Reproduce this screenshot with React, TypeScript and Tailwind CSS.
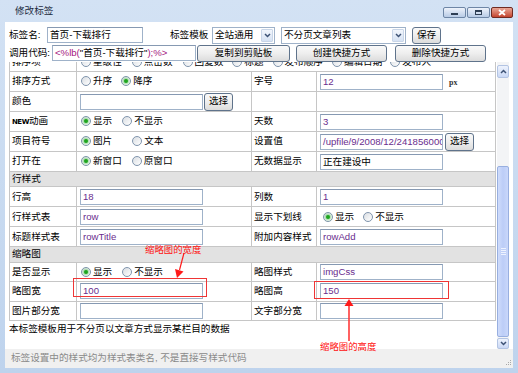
import type { ReactNode } from "react";

const FONT = "font-['Liberation_Sans','Noto_Sans_CJK_SC',sans-serif]";
const LATIN = "text-[#6a2d8e]";

function Radio({ checked = false, label, className = "" }: { checked?: boolean; label: string; className?: string }) {
  return (
    <span className={`inline-flex items-center ${className}`}>
      <span className="flex h-[10px] w-[10px] items-center justify-center rounded-full border border-[#8095ad] bg-gradient-to-br from-[#d9dde2] to-white">
        {checked && <span className="h-[4px] w-[4px] rounded-full bg-[#1fa51f] shadow-[0_0_2px_1px_rgba(70,200,70,0.55)]" />}
      </span>
      <span className="ml-[2px]">{label}</span>
    </span>
  );
}

function Field({ children, className = "" }: { children?: ReactNode; className?: string }) {
  return (
    <div
      className={`h-[16px] shrink-0 overflow-hidden whitespace-nowrap border border-[#9fb2c9] border-t-[#8699b2] bg-white pl-[2px] leading-[14px] ${className}`}
    >
      {children}
    </div>
  );
}

function Btn({ children, className = "" }: { children: ReactNode; className?: string }) {
  return (
    <div
      className={`flex shrink-0 items-center justify-center rounded-[3px] border border-[#5f738b] bg-gradient-to-b from-[#fafafa] via-[#eeeeee] to-[#dcdcdc] ${className}`}
    >
      {children}
    </div>
  );
}

function Chevron({ up = false }: { up?: boolean }) {
  return (
    <svg width="7" height="5" viewBox="0 0 7 5">
      <path d={up ? "M1 4 L3.5 1.5 L6 4" : "M1 1 L3.5 3.5 L6 1"} fill="none" stroke="#3d5275" strokeWidth="1.5" />
    </svg>
  );
}

function Select({ value, className = "" }: { value: string; className?: string }) {
  return (
    <div className={`flex h-[17px] shrink-0 items-center border border-[#9fb2c9] bg-white ${className}`}>
      <span className="flex-1 overflow-hidden whitespace-nowrap pl-[2px]">{value}</span>
      <span className="mr-[1px] flex h-[13px] w-[12px] items-center justify-center rounded-[1px] border border-[#c9d6e8] bg-gradient-to-b from-[#f2f6fc] to-[#d6e2f3]">
        <Chevron />
      </span>
    </div>
  );
}

const td = "border border-[#c6c6c6] p-0";

function Row({ l1, v1, l2, v2, h = "h-[20px]" }: { l1: ReactNode; v1?: ReactNode; l2?: ReactNode; v2?: ReactNode; h?: string }) {
  return (
    <tr className={h}>
      <td className={`${td} pl-[2px]`}>{l1}</td>
      <td className={td}>
        <div className="flex items-center pl-[3px]">{v1}</div>
      </td>
      <td className={`${td} pl-[2px] whitespace-nowrap`}>{l2}</td>
      <td className={td}>
        <div className="flex items-center pl-[3px]">{v2}</div>
      </td>
    </tr>
  );
}

function Section({ title, h }: { title: string; h: string }) {
  return (
    <tr className={`${h} bg-[#e2e2e2]`}>
      <td colSpan={4} className={`${td} pl-[2px]`}>
        {title}
      </td>
    </tr>
  );
}

function WinBtn({ children, className = "" }: { children: ReactNode; className?: string }) {
  return (
    <div className={`flex h-[11px] items-center justify-center rounded-[2px] border ${className}`}>{children}</div>
  );
}

export default function App() {
  return (
    <div className={`relative h-[373px] w-[518px] overflow-hidden bg-gradient-to-b from-[#d3e2f4] to-[#bed3ed] text-[9.6px] text-black ${FONT}`}>
      {/* title bar */}
      <div className="flex h-[22px]">
        <span className="ml-[15px] self-center text-[#1c2b40]">修改标签</span>
        <div className="ml-auto mr-[5px] mt-[7px] flex gap-[1px]">
          <WinBtn className="w-[23px] border-[#6e86a6] bg-gradient-to-b from-[#eef3fb] to-[#b8cbe6]">
            <span className="mt-[3px] h-[2px] w-[7px] bg-[#2f3f55]" />
          </WinBtn>
          <WinBtn className="w-[23px] border-[#6e86a6] bg-gradient-to-b from-[#eef3fb] to-[#b8cbe6]">
            <span className="h-[5px] w-[7px] border border-t-2 border-[#2f3f55]" />
          </WinBtn>
          <WinBtn className="w-[22px] border-[#6f2b22] bg-gradient-to-b from-[#e9a696] to-[#c3432e]">
            <svg width="8" height="7" viewBox="0 0 8 7">
              <path d="M1 1 L7 6 M7 1 L1 6" stroke="white" strokeWidth="1.8" />
            </svg>
          </WinBtn>
        </div>
      </div>

      {/* body */}
      <div className="mx-[5px] flex h-[346px] flex-col bg-white">
        <div className="mt-[4px] flex h-[18px] items-center">
          <span className="ml-[4px] w-[38px] shrink-0">标签名:</span>
          <Field className="w-[96px]">首页-下载排行</Field>
          <span className="ml-[27px] w-[42px] shrink-0">标签模板</span>
          <Select className="w-[63px]" value="全站通用" />
          <Select className="ml-[6px] w-[125px]" value="不分页文章列表" />
          <Btn className="ml-[6px] h-[17px] w-[29px]">保存</Btn>
        </div>
        <div className="flex h-[18px] items-center">
          <span className="ml-[4px] w-[43px] shrink-0">调用代码:</span>
          <Field className="w-[144px]">
            <span className="text-[#a5157e]">&lt;%lb(</span>"首页-下载排行"<span className="text-[#a5157e]">);%&gt;</span>
          </Field>
          <Btn className="ml-[1px] h-[17px] w-[93px]">复制到剪贴板</Btn>
          <Btn className="ml-[6px] h-[17px] w-[91px]">创建快捷方式</Btn>
          <Btn className="ml-[8px] h-[17px] w-[91px]">删除快捷方式</Btn>
        </div>

        {/* scrolling form */}
        <div className="ml-[4px] flex h-[287px]">
          <div className="w-[487px] overflow-hidden">
            <table className="-mt-[11px] w-[486px] table-fixed border-collapse">
              <colgroup>
                <col className="w-[67px]" />
                <col className="w-[175px]" />
                <col className="w-[65px]" />
                <col className="w-[179px]" />
              </colgroup>
              <tbody>
                <tr className="h-[20px]">
                  <td className={`${td} pl-[2px] align-bottom pb-[2px]`}>排序项</td>
                  <td colSpan={3} className={`${td} align-bottom pb-[2px]`}>
                    <div className="flex items-center pl-[4px]">
                      <Radio label="星级性" />
                      <Radio className="ml-[10px]" label="点击数" />
                      <Radio className="ml-[10px]" label="回复数" />
                      <Radio className="ml-[9px]" label="标题" />
                      <Radio className="ml-[9px]" label="发布顺序" />
                      <Radio className="ml-[9px]" label="编辑日期" />
                      <Radio className="ml-[8px]" label="发布人" />
                    </div>
                  </td>
                </tr>
                <Row
                  l1="排序方式"
                  v1={
                    <>
                      <Radio className="ml-[1px]" label="升序" />
                      <Radio checked className="ml-[9px]" label="降序" />
                    </>
                  }
                  l2="字号"
                  v2={
                    <>
                      <Field className={`w-[123px] ${LATIN}`}>12</Field>
                      <span className="ml-[6px] mt-[3px] font-['Liberation_Serif',serif] text-[8px] font-bold text-[#333]">px</span>
                    </>
                  }
                />
                <Row
                  l1="颜色"
                  v1={
                    <>
                      <Field className="w-[123px]" />
                      <Btn className="ml-[1px] h-[18px] w-[29px]">选择</Btn>
                    </>
                  }
                />
                <Row
                  l1={
                    <>
                      <span className="font-['DejaVu_Sans',sans-serif] text-[7px] font-bold tracking-[-0.5px]">NEW</span>动画
                    </>
                  }
                  v1={
                    <>
                      <Radio checked className="ml-[1px]" label="显示" />
                      <Radio className="ml-[10px]" label="不显示" />
                    </>
                  }
                  l2="天数"
                  v2={<Field className={`w-[123px] ${LATIN}`}>3</Field>}
                />
                <Row
                  l1="项目符号"
                  v1={
                    <>
                      <Radio checked className="ml-[1px]" label="图片" />
                      <Radio className="ml-[20px]" label="文本" />
                    </>
                  }
                  l2="设置值"
                  v2={
                    <>
                      <Field className={`w-[123px] ${LATIN}`}>/upfile/9/2008/12/241856000.gif</Field>
                      <Btn className="ml-[2px] h-[18px] w-[29px]">选择</Btn>
                    </>
                  }
                />
                <Row
                  l1="打开在"
                  v1={
                    <>
                      <Radio checked className="ml-[1px]" label="新窗口" />
                      <Radio className="ml-[10px]" label="原窗口" />
                    </>
                  }
                  l2="无数据显示"
                  v2={<Field className="w-[123px]">正在建设中</Field>}
                />
                <Section title="行样式" h="h-[14px]" />
                <Row
                  l1="行高"
                  v1={<Field className={`w-[123px] ${LATIN}`}>18</Field>}
                  l2="列数"
                  v2={<Field className={`w-[123px] ${LATIN}`}>1</Field>}
                />
                <Row
                  l1="行样式表"
                  v1={<Field className={`w-[123px] ${LATIN}`}>row</Field>}
                  l2="显示下划线"
                  v2={
                    <>
                      <Radio checked className="ml-[3px]" label="显示" />
                      <Radio className="ml-[9px]" label="不显示" />
                    </>
                  }
                />
                <Row
                  l1="标题样式表"
                  v1={<Field className={`w-[123px] ${LATIN}`}>rowTitle</Field>}
                  l2="附加内容样式"
                  v2={<Field className={`w-[123px] ${LATIN}`}>rowAdd</Field>}
                />
                <Section title="缩略图" h="h-[14px]" />
                <Row
                  h="h-[19px]"
                  l1="是否显示"
                  v1={
                    <>
                      <Radio checked className="ml-[1px]" label="显示" />
                      <Radio className="ml-[10px]" label="不显示" />
                    </>
                  }
                  l2="略图样式"
                  v2={<Field className={`w-[123px] ${LATIN}`}>imgCss</Field>}
                />
                <Row
                  l1="略图宽"
                  v1={<Field className={`w-[123px] ${LATIN}`}>100</Field>}
                  l2="略图高"
                  v2={<Field className={`w-[123px] ${LATIN}`}>150</Field>}
                />
                <Row
                  h="h-[19px]"
                  l1="图片部分宽"
                  v1={<Field className="w-[123px]" />}
                  l2="文字部分宽"
                  v2={<Field className="w-[123px]" />}
                />
              </tbody>
            </table>
            <div className="leading-[16px]">本标签模板用于不分页以文章方式显示某栏目的数据</div>
          </div>

          {/* scrollbar */}
          <div className="ml-[1px] flex w-[12px] flex-col bg-[#f3f4f6]">
            <div className="mt-[3px] flex h-[13px] items-center justify-center rounded-[2px] border border-[#b3c4e3] bg-gradient-to-b from-[#eef3fd] to-[#cad8f5]">
              <Chevron up />
            </div>
            <div className="mt-[88px] flex h-[171px] flex-col items-center justify-center gap-[1px] rounded-[2px] border border-[#98afe0] bg-gradient-to-r from-[#cfdcfb] via-[#bccdf7] to-[#c9d7fa]">
              <span className="h-[1px] w-[5px] bg-[#eef3ff]" />
              <span className="h-[1px] w-[5px] bg-[#eef3ff]" />
              <span className="h-[1px] w-[5px] bg-[#eef3ff]" />
              <span className="h-[1px] w-[5px] bg-[#eef3ff]" />
            </div>
            <div className="mt-[1px] flex h-[11px] items-center justify-center rounded-[2px] border border-[#b3c4e3] bg-gradient-to-b from-[#eef3fd] to-[#cad8f5]">
              <Chevron />
            </div>
          </div>
        </div>

        {/* status band */}
        <div className="flex flex-1 items-center bg-[#f0f0f0] pl-[6px] text-[#8a8a8a]">
          <span>标签设置中的样式均为样式表类名, 不是直接写样式代码</span>
          <svg className="ml-auto mr-[1px] mt-[8px]" width="7" height="7" viewBox="0 0 7 7">
            <g fill="#a9a9a9">
              <rect x="5" y="1" width="1" height="1" />
              <rect x="3" y="3" width="1" height="1" />
              <rect x="5" y="3" width="1" height="1" />
              <rect x="1" y="5" width="1" height="1" />
              <rect x="3" y="5" width="1" height="1" />
              <rect x="5" y="5" width="1" height="1" />
            </g>
          </svg>
        </div>
      </div>

      {/* red annotations */}
      <div className="pointer-events-none absolute left-[73px] top-[278px] h-[19px] w-[134px] border border-[#ef3535]" />
      <div className="pointer-events-none absolute left-[314px] top-[281px] h-[18px] w-[135px] border border-[#ef3535]" />
      <svg className="pointer-events-none absolute left-0 top-0" width="518" height="373">
        <line x1="184" y1="253" x2="179.5" y2="270" stroke="#ff1a1a" strokeWidth="1.2" />
        <polygon points="175,269 183.5,271.5 177,278" fill="#ff1a1a" />
        <line x1="349" y1="305" x2="349" y2="341" stroke="#ff3a3a" strokeWidth="1.6" />
        <polygon points="344.5,306 353.5,306 349,299" fill="#ff1a1a" />
      </svg>
      <span className="pointer-events-none absolute left-[145px] top-[243px] text-[9.4px] text-[#ff1010]">缩略图的宽度</span>
      <span className="pointer-events-none absolute left-[320px] top-[340px] text-[9.4px] text-[#ff1010]">缩略图的高度</span>
    </div>
  );
}
